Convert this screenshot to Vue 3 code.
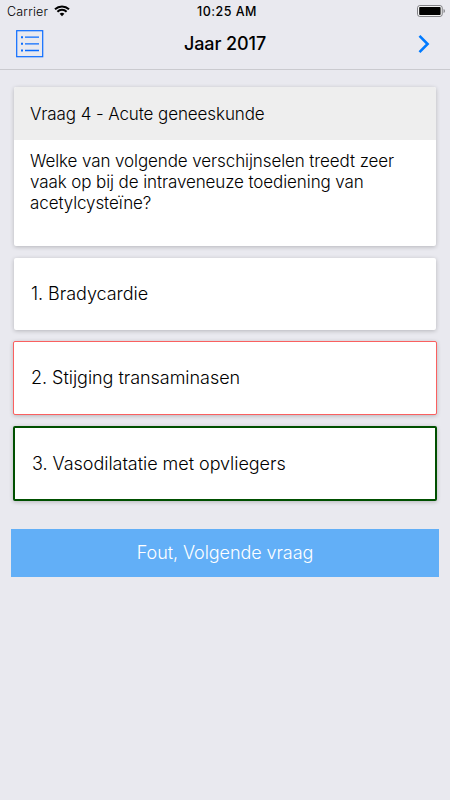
<script setup>
import { ref } from 'vue'

const title = ref('Jaar 2017')

const question = {
  header: 'Vraag 4 - Acute geneeskunde',
  lines: [
    'Welke van volgende verschijnselen treedt zeer',
    'vaak op bij de intraveneuze toediening van',
    'acetylcysteïne?'
  ]
}

const answers = ref([
  { id: 1, text: 'Bradycardie', state: '' },
  { id: 2, text: 'Stijging transaminasen', state: 'wrong' },
  { id: 3, text: 'Vasodilatatie met opvliegers', state: 'correct' }
])
</script>

<template>
  <div class="screen">
    <header class="top">
      <div class="status-bar">
        <div class="carrier">
          <span>Carrier</span>
          <svg class="wifi" width="16" height="12" viewBox="0 0 16 12">
            <path d="M1 4.2a10.2 10.2 0 0 1 14 0" />
            <path d="M3.4 6.7a6.7 6.7 0 0 1 9.2 0" />
            <path class="dot" d="M8 11.2L5.6 8.8a3.5 3.5 0 0 1 4.8 0z" />
          </svg>
        </div>
        <span class="time">10:25 AM</span>
        <div class="power">
          <svg width="28" height="12" viewBox="0 0 28 12">
            <rect x="0.6" y="0.6" width="24.6" height="10.8" rx="2.2" fill="#fff" stroke="#77777b" />
            <rect x="2.2" y="2" width="21.4" height="8" rx="0.8" />
            <path d="M26.6 4v4c1.6-.6 1.6-3.4 0-4z" fill="#77777b" />
          </svg>
        </div>
      </div>
      <nav class="nav-bar">
        <button class="nav-button">
          <svg width="28" height="28" viewBox="0 0 28 28" fill="none" stroke="#0a6cff">
            <rect x="0.7" y="0.7" width="26" height="26" stroke-width="1.2" />
            <path d="M9 7.2h14M9 13.8h14M9 20.5h14" stroke-width="1.3" />
            <path d="M5 7.2h2M5 13.8h2M5 20.5h2" stroke-width="2" />
          </svg>
        </button>
        <h1>{{ title }}</h1>
        <button class="nav-button">
          <svg width="12" height="20" viewBox="0 0 12 20" fill="none" stroke="#007aff" stroke-width="2.6">
            <path d="M1.5 1.8L9.6 10l-8.1 8.2" />
          </svg>
        </button>
      </nav>
    </header>

    <main>
      <section class="card question">
        <h2>{{ question.header }}</h2>
        <p>
          <span v-for="line in question.lines" :key="line">{{ line }}</span>
        </p>
      </section>

      <div v-for="answer in answers" :key="answer.id" class="card answer" :class="answer.state">
        {{ answer.id }}. {{ answer.text }}
      </div>

      <button class="next">Fout, Volgende vraag</button>
    </main>
  </div>
</template>

<style>
body {
  background: #e9e9ef;
}
</style>

<style scoped>
.screen {
  min-height: 800px;
  background: #e9e9ef;
  font-family: Inter, 'Liberation Sans', sans-serif;
  color: #000;
}

.top {
  height: 69px;
  border-bottom: 1px solid #cacacf;
}

.status-bar {
  display: grid;
  grid-template-columns: 1fr auto 1fr;
  align-items: center;
  height: 22px;
  padding: 0 5px 0 7px;
  font-size: 12.5px;
}

.carrier {
  display: flex;
  align-items: center;
  gap: 6px;
  font-weight: 300;
  letter-spacing: 0.2px;
}

.wifi path {
  fill: none;
  stroke: #000;
  stroke-width: 2;
}

.wifi .dot {
  fill: #000;
  stroke: none;
}

.time {
  padding-left: 2px;
  font-weight: 500;
  letter-spacing: 0.5px;
}

.power {
  display: flex;
  justify-content: flex-end;
}

.nav-bar {
  display: grid;
  grid-template-columns: 60px 1fr 60px;
  align-items: center;
  height: 44px;
}

.nav-button {
  display: flex;
  padding: 0 0 0 16px;
  border: 0;
  background: none;
  cursor: pointer;
}

.nav-button:last-child {
  padding-left: 28px;
}

h1 {
  margin: 0;
  padding-bottom: 2px;
  font-size: 18px;
  font-weight: 500;
  letter-spacing: -0.1px;
  text-align: center;
}

main {
  padding: 17px 14px 0;
}

.card {
  box-sizing: border-box;
  background: #fff;
  border-radius: 2px;
  box-shadow: 0 1px 4px rgba(0, 0, 0, 0.22);
}

.question {
  height: 159px;
  margin-bottom: 12px;
  overflow: hidden;
}

.question h2 {
  margin: 0;
  padding: 1px 0 0 16px;
  background: #eeeeee;
  font-size: 17px;
  font-weight: 300;
  line-height: 52px;
  letter-spacing: -0.1px;
}

.question p {
  margin: 0;
  padding: 11px 0 0 16px;
  font-size: 17px;
  font-weight: 300;
  line-height: 21px;
  letter-spacing: -0.1px;
}

.question p span {
  display: block;
  white-space: nowrap;
}

.answer {
  display: flex;
  align-items: center;
  height: 72px;
  margin-bottom: 11px;
  padding: 0 0 2px 17px;
  font-size: 18px;
  font-weight: 300;
  letter-spacing: -0.04px;
}

.answer.wrong {
  height: 74px;
  margin: 0 -1px 11px;
  padding-bottom: 1px;
  border: 1px solid #fa6060;
}

.answer.correct {
  height: 75px;
  margin: 0 -1px 28px;
  padding-bottom: 1px;
  border: 2px solid #005000;
}

.next {
  display: block;
  width: 428px;
  height: 48px;
  margin-left: -3px;
  padding: 0 0 1px;
  border: 0;
  background: #62aff7;
  color: #fff;
  font-family: inherit;
  font-size: 18px;
  font-weight: 300;
  letter-spacing: -0.08px;
  cursor: pointer;
}
</style>
